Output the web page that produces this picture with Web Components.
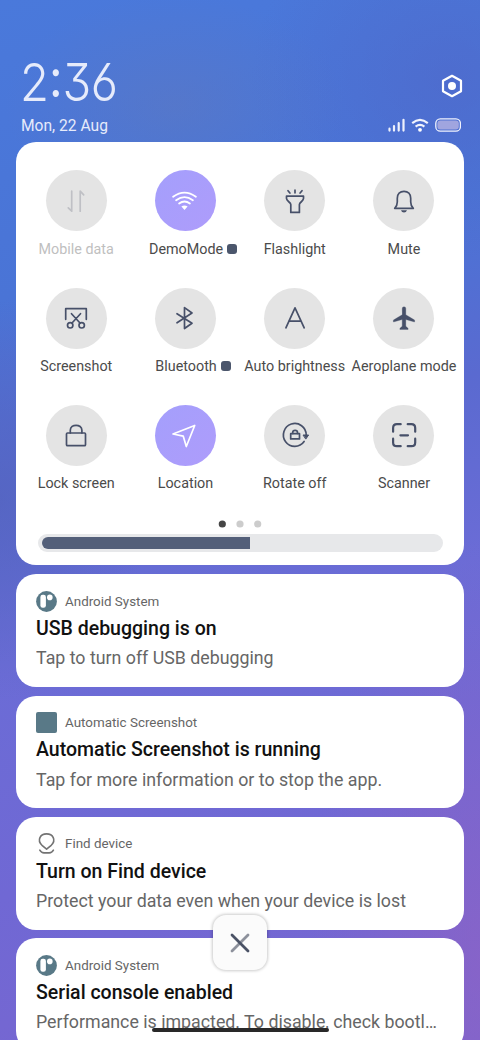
<!DOCTYPE html>
<html lang="en">
<head>
<meta charset="utf-8">
<title>Control centre</title>
<style>
html, body { margin: 0; height: 1040px; overflow: hidden; }
body { font-family: Roboto, "Liberation Sans", sans-serif; }
</style>
</head>
<body>
<phone-shade>
  <status-header slot="header" time="2:36" date="Mon, 22 Aug"></status-header>
  <quick-panel slot="panel">
    <quick-tile icon="data" disabled>Mobile data</quick-tile>
    <quick-tile icon="wifi" active more>DemoMode</quick-tile>
    <quick-tile icon="torch">Flashlight</quick-tile>
    <quick-tile icon="bell">Mute</quick-tile>
    <quick-tile icon="shot">Screenshot</quick-tile>
    <quick-tile icon="bluetooth" more>Bluetooth</quick-tile>
    <quick-tile icon="auto">Auto brightness</quick-tile>
    <quick-tile icon="plane">Aeroplane mode</quick-tile>
    <quick-tile icon="lock">Lock screen</quick-tile>
    <quick-tile icon="location" active>Location</quick-tile>
    <quick-tile icon="rotate">Rotate off</quick-tile>
    <quick-tile icon="scan">Scanner</quick-tile>
  </quick-panel>
  <notice-card icon="system"><span slot="app">Android System</span><span slot="title">USB debugging is on</span>Tap to turn off USB debugging</notice-card>
  <notice-card icon="square"><span slot="app">Automatic Screenshot</span><span slot="title">Automatic Screenshot is running</span>Tap for more information or to stop the app.</notice-card>
  <notice-card icon="find"><span slot="app">Find device</span><span slot="title">Turn on Find device</span>Protect your data even when your device is lost</notice-card>
  <notice-card icon="system"><span slot="app">Android System</span><span slot="title">Serial console enabled</span>Performance is impacted. To disable, check bootloader.</notice-card>
  <close-button slot="overlay"></close-button>
</phone-shade>
<script>
const TILE_ICONS = {
  data: '<g stroke="#bfc0c5" stroke-width="1.7"><path d="M15.7 10.2V30.2L12.3 26.8M24.2 30.2V10.2L27.7 13.8"/></g>',
  wifi: '<g stroke-width="1.8"><path d="M8.1 15.8Q19.5 7.5 30.9 15.8M11.1 19.3Q19.5 13.1 27.9 19.3M14.1 22.5Q19.5 18.5 24.9 22.5"/></g><path d="M16.4 25.6Q19.5 23.2 22.6 25.6L19.5 29Z" fill="#fff" stroke="none"/>',
  torch: '<path d="M11.5 15.2H28.5V17.6C28.5 20.2 24.4 21.2 24.4 23.5V31.4H15.8V23.5C15.8 21.2 11.5 20.2 11.5 17.6Z"/><path d="M20 9.2V11.8M13 9.7L14.9 12M27 9.7L25.1 12"/>',
  bell: '<path d="M10.7 27.3C12.5 25.5 13.3 24 13.3 21V17.2C13.3 13 16 10.3 20 10.3S26.7 13 26.7 17.2V21C26.7 24 27.5 25.5 29.3 27.3Z"/><path d="M17 29.2H23Q22.3 31.5 20 31.5T17 29.2Z" fill="#475069" stroke="none"/>',
  shot: '<path d="M9.7 21.3V10.7H30.3V21.3M15.5 15.7L24 25M24.5 15.7L16 25"/><circle cx="14.2" cy="27.3" r="2.7"/><circle cx="25.7" cy="27.3" r="2.7"/>',
  bluetooth: '<path d="M12 15.7L27 25.2L19.5 30.5V9.6L27 15L12 24.8"/>',
  auto: '<path d="M10.9 29.8L20 9.8L29.2 29.8M13.8 23.2H26.2"/>',
  plane: '<path d="M18.2 10.5Q18.2 8.7 20 8.7T21.8 10.5V16.7L30.6 22.1V24L21.8 21.5V28.3L24.1 30.3V31.5H15.9V30.3L18.2 28.3V21.5L9.4 24V22.1L18.2 16.7Z" fill="#475069" stroke="#475069" stroke-width=".3"/>',
  lock: '<rect x="10.5" y="18" width="19" height="12.7" rx="1"/><path d="M14.3 18V15.3C14.3 8.6 25.9 8.6 25.9 15.3V18"/>',
  location: '<path d="M8 19L29.7 10.5L21.3 31.5L18.2 21.1Z"/>',
  rotate: '<path d="M29.1 26.5A11.4 11.4 0 1 1 31.2 20"/><path d="M28.4 20H33.6L31 23.8Z" fill="#475069" stroke-width="1"/><rect x="15.7" y="18.7" width="8.8" height="5.2"/><path d="M17.7 18.5V17.5C17.7 14.7 22.5 14.7 22.5 17.5V18.5"/>',
  scan: '<path stroke-width="2.2" d="M9.1 16.7V13Q9.1 9.2 12.9 9.2H16.7M23.7 9.2H27.4Q31.2 9.2 31.2 13V16.7M31.2 23.7V27.4Q31.2 31.2 27.4 31.2H23.7M16.7 31.2H12.9Q9.1 31.2 9.1 27.4V23.7M16.4 20.3H24"/>'
};

const APP_ICONS = {
  system: '<circle cx="10.5" cy="10.5" r="10.4" fill="#597987"/><rect x="4.4" y="3.7" width="5.5" height="13.1" rx="2.3" fill="#fff"/><circle cx="13.8" cy="6.4" r="2.8" fill="#fff"/>',
  square: '<rect width="21" height="21" rx="2" fill="#597987"/>',
  find: '<g fill="none" stroke="#737373" stroke-width="1.6" stroke-linecap="round" stroke-linejoin="round"><path d="M10.6 16.2L6 12.3C.6 6.8 4.4.9 10.6.9S20.6 6.8 15.2 12.3Z"/><path d="M3.8 17.2Q5.3 19.9 8 19.9H13.2Q16 19.9 17.4 17.2"/></g>'
};

class Base extends HTMLElement {
  connectedCallback() {
    if (!this.shadowRoot) this.attachShadow({ mode: 'open' }).innerHTML = this.view();
  }
}

customElements.define('phone-shade', class extends Base {
  view() {
    return `<style>
      :host { display: flex; flex-direction: column; gap: 8.6px; position: relative; box-sizing: border-box;
        width: 480px; height: 1040px; padding: 0 16px; overflow: hidden;
        background:
          radial-gradient(ellipse 170px 110px at 175px 105px, #6478b86a, #6478b800),
          radial-gradient(ellipse 150px 200px at 0 500px, #5263bca0, #5263bc00),
          radial-gradient(ellipse 200px 180px at 450px 80px, #5262c478, #5262c400),
          radial-gradient(ellipse 170px 420px at 480px 960px, #9062c4a0, #9062c400),
          linear-gradient(167deg, #4a79db 0, #4a74d6 26%, #5a6ad0 42%, #6b6cd6 58%, #7068d4 78%, #7866d0 100%); }
    </style><slot name="header"></slot><slot name="panel"></slot><slot></slot><slot name="overlay"></slot>`;
  }
});

customElements.define('status-header', class extends Base {
  view() {
    return `<style>
      :host { display: flex; justify-content: space-between; flex: none; height: 142px; margin: 0 -15px -8.6px -11px; padding: 0 16px; box-sizing: border-box; color: #e6ebfb; }
      .left { display: flex; flex-direction: column; padding-top: 54px; }
      .time { font: 300 52.5px/56px Inter, Lato, sans-serif; font-feature-settings: "cv09", "ss01", "cv03", "calt" 0; letter-spacing: -.8px; height: 56px; margin-left: -.6px; white-space: nowrap; transform: scaleX(.9); transform-origin: 0 0; }
      .time span { font-weight: 400; line-height: 0; vertical-align: 4px; margin: 0 .8px; }
      .date { font-size: 15.6px; line-height: 18px; margin-top: 7px; }
      .right { display: flex; flex-direction: column; align-items: flex-end; padding-top: 74px; }
      .status { display: flex; gap: 6px; margin: 20px 2px 0 0; }
      svg { display: block; fill: none; }
    </style>
    <div class="left"><div class="time">${this.getAttribute('time').replace(':', '<span>:</span>')}</div><div class="date">${this.getAttribute('date')}</div></div>
    <div class="right">
      <svg width="22" height="24" viewBox="0 0 22 24"><path d="M11 1.8L20 6.8V17.2L11 22.2L2 17.2V6.8Z" stroke="#fff" stroke-width="2.2" stroke-linejoin="round"/><circle cx="11" cy="12" r="4" fill="#fff"/></svg>
      <div class="status">
        <svg width="17" height="14" viewBox="0 0 17 14"><path stroke="#eef1fc" stroke-width="2.2" stroke-linecap="round" d="M1.5 10.7V12.6M6 8.2V12.6M10.7 5.2V12.6M15.5 1.8V12.6"/></svg>
        <svg width="18" height="14" viewBox="0 0 18 14"><path stroke="#f1f3fd" stroke-width="2.1" d="M1.2 5.1Q9 -1.5 16.8 5.1M4.6 8.6Q9 5.2 13.4 8.6"/><circle cx="9" cy="11.8" r="1.9" fill="#fff"/></svg>
        <svg width="26" height="14" viewBox="0 0 26 14"><rect x=".8" y=".8" width="24.6" height="12.4" rx="4.5" stroke="#f0f2fd" stroke-width="1.3"/><rect x="2.4" y="2.4" width="21.4" height="9.2" rx="3" fill="#a0a5df"/></svg>
      </div>
    </div>`;
  }
});

customElements.define('quick-panel', class extends Base {
  view() {
    return `<style>
      :host { display: block; flex: none; box-sizing: border-box; height: 422.8px; margin-bottom: .8px; padding: 28.4px 5.4px 0 5.6px; border-radius: 20px; background: #fff; }
      .grid { display: grid; grid-template-columns: repeat(4, 1fr); grid-auto-rows: 117.3px; }
      .dots { display: block; margin: -2px auto 6px; }
      .bar { display: flex; box-sizing: border-box; margin: 0 15.6px 0 16.4px; height: 18px; padding: 3px 4px; border-radius: 9px; background: #e7e8ea; }
      .bar i { width: 208px; border-radius: 6px 0 0 6px; background: #535f79; }
    </style><div class="grid"><slot></slot></div>
    <svg class="dots" width="44" height="8" viewBox="0 0 44 8"><circle cx="4.3" cy="4" r="3.6" fill="#454545"/><circle cx="22" cy="4" r="3.6" fill="#ccc"/><circle cx="39.7" cy="4" r="3.6" fill="#ccc"/></svg>
    <div class="bar"><i></i></div>`;
  }
});

customElements.define('quick-tile', class extends Base {
  view() {
    return `<style>
      :host { display: flex; flex-direction: column; align-items: center; color: #4b4b4b; }
      :host([disabled]) { color: #bfbfbf; }
      .disc { width: 61px; height: 61px; border-radius: 50%; background: #e4e4e4; display: grid; place-items: center; }
      :host([active]) .disc { background: linear-gradient(135deg, #a49ffc, #ae9cfb); }
      svg { width: 40px; height: 40px; fill: none; stroke: #475069; stroke-width: 1.7; stroke-linecap: round; stroke-linejoin: round; }
      :host([active]) svg { stroke: #fff; }
      .label { position: relative; margin-top: 8.5px; font-size: 14.35px; line-height: 20px; white-space: nowrap; }
      .label i { position: absolute; left: calc(100% + 4px); top: 4px; width: 10px; height: 10px; border-radius: 3px; background: #4b566c; }
      :host([more]) .label { left: .6px; }
    </style><div class="disc"><svg viewBox="0 0 40 40">${TILE_ICONS[this.getAttribute('icon')]}</svg></div>
    <div class="label"><slot></slot>${this.hasAttribute('more') ? '<i></i>' : ''}</div>`;
  }
});

customElements.define('notice-card', class extends Base {
  view() {
    return `<style>
      :host { display: flex; flex-direction: column; flex: none; box-sizing: border-box; height: 112.8px; padding: 16.4px 20px 0; border-radius: 20px; background: #fff; color: #666; }
      .app { display: flex; align-items: center; gap: 8px; height: 21px; font-size: 13.4px; }
      svg { width: 21px; height: 21px; display: block; }
      .title { font-size: 19.5px; font-weight: 500; line-height: 26px; margin-top: 4.2px; color: #111; white-space: nowrap; }
      .text { font-size: 17.8px; line-height: 24px; margin-top: 4.4px; width: 404px; white-space: nowrap; overflow: hidden; text-overflow: ellipsis; }
    </style><div class="app"><svg viewBox="0 0 21 21">${APP_ICONS[this.getAttribute('icon')]}</svg><slot name="app"></slot></div>
    <div class="title"><slot name="title"></slot></div><div class="text"><slot></slot></div>`;
  }
});

customElements.define('close-button', class extends Base {
  view() {
    return `<style>
      :host { position: absolute; left: 0; right: 0; top: 915px; display: flex; flex-direction: column; align-items: center; }
      .box { width: 54px; height: 55px; border-radius: 13px; background: #fbfbfb; box-shadow: 0 0 3px 1px #0003; display: grid; place-items: center; }
      .home { width: 177px; height: 4px; margin-top: 58px; border-radius: 2px; background: #292929; }
      svg { fill: none; stroke-width: 2.8; stroke-linecap: round; }
    </style><div class="box"><svg width="20" height="20" viewBox="0 0 20 20"><path stroke="#8d919c" d="M18 2L2 18"/><path stroke="#4a5265" d="M2 2L18 18"/></svg></div><div class="home"></div>`;
  }
});
</script>
</body>
</html>
